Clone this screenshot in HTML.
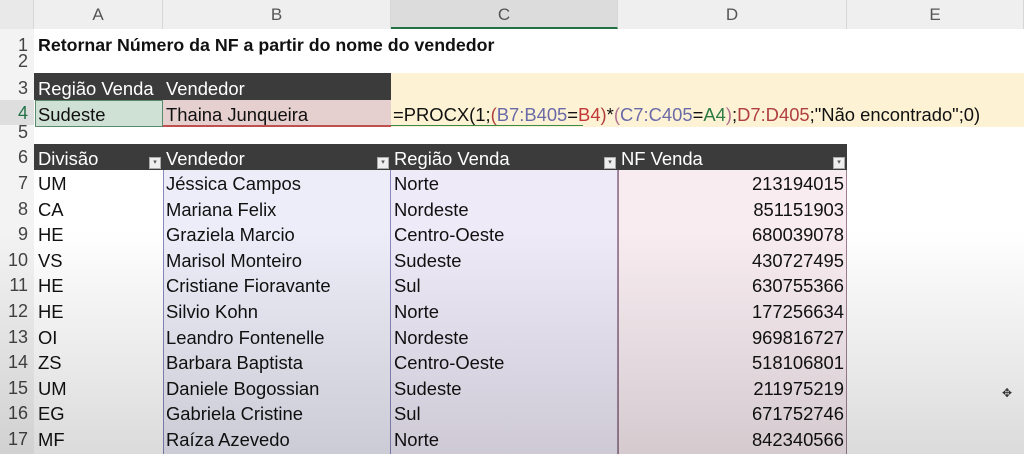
<!DOCTYPE html>
<html><head><meta charset="utf-8"><style>
*{margin:0;padding:0;box-sizing:border-box}
body{width:1024px;height:454px;overflow:hidden;background:#fff;position:relative;font-family:"Liberation Sans",Calibri,sans-serif;font-size:18.4px;color:#111}
.a{position:absolute;white-space:nowrap}
.hdr{position:absolute;top:0;height:29px;background:#efefef;border-right:1px solid #d6d6d6;color:#555;font-size:17px;text-align:center;line-height:30px}
.rn{position:absolute;left:0;width:34px;text-align:right;padding-right:6px;color:#444;font-size:18px;background:#f3f3f3}
.dark{position:absolute;background:#3b3b3b;color:#fff}
.dd{position:absolute;width:12px;height:12px;background:#eee;border:1px solid #aaa;font-size:7px;line-height:10px;text-align:center;color:#555}
.r{position:absolute;height:25.6px;line-height:27px}
</style></head><body>
<div class="hdr" style="left:0;width:34px;background:#e9e9e9"></div>
<div class="hdr" style="left:34px;width:129px">A</div>
<div class="hdr" style="left:163px;width:228px">B</div>
<div class="hdr" style="left:391px;width:227px;background:#dcdcdc;border-bottom:2px solid #217346">C</div>
<div class="hdr" style="left:618px;width:229px">D</div>
<div class="hdr" style="left:847px;width:177px">E</div>
<div class="rn" style="top:29px;height:425px"></div>
<div class="rn" style="top:33px;line-height:24px">1</div>
<div class="rn" style="top:54px;line-height:14px;height:16px;overflow:hidden">2</div>
<div class="rn" style="top:75px;line-height:26px">3</div>
<div class="rn" style="top:100px;line-height:27px;background:#dedede;color:#217346">4</div>
<div class="rn" style="top:125px;line-height:14px;height:17px;overflow:hidden">5</div>
<div class="rn" style="top:144px;line-height:26px">6</div>

<div class="a" style="left:38px;top:35px;font-weight:bold;font-size:17.8px">Retornar Número da NF a partir do nome do vendedor</div>

<div class="dark" style="left:34px;top:73px;width:357px;height:27px"></div>
<div class="a" style="left:38px;top:78px;color:#fff">Região Venda</div>
<div class="a" style="left:166px;top:78px;color:#fff">Vendedor</div>
<div class="a" style="left:391px;top:73px;width:633px;height:54px;background:#fdf3d4"></div>
<div class="a" style="left:35px;top:100px;width:128px;height:27px;background:#cfe0d5;border:1px solid #5a8a6a"></div>
<div class="a" style="left:163px;top:100px;width:228px;height:27px;background:#e5cfcf;border-bottom:2px solid #c05050"></div>
<div class="a" style="left:38px;top:104px">Sudeste</div>
<div class="a" style="left:166px;top:104px">Thaina Junqueira</div>
<div class="a" style="left:391px;top:125px;width:192px;height:1px;background:#3a8a4a"></div>
<div class="a" style="left:393px;top:104px">=PROCX(1;<span style="color:#b04040">(</span><span style="color:#6a6aa8">B7:B405</span>=<span style="color:#c03838">B4</span><span style="color:#b04040">)</span>*<span style="color:#b07090">(</span><span style="color:#6a6aa8">C7:C405</span>=<span style="color:#2c7a44">A4</span><span style="color:#b07090">)</span>;<span style="color:#b04040">D7:D405</span>;"Não encontrado";0)</div>

<div class="dark" style="left:34px;top:144px;width:813px;height:26px"></div>
<div class="a" style="left:38px;top:148px;color:#fff">Divisão</div>
<div class="a" style="left:166px;top:148px;color:#fff">Vendedor</div>
<div class="a" style="left:394px;top:148px;color:#fff">Região Venda</div>
<div class="a" style="left:621px;top:148px;color:#fff">NF Venda</div>
<div class="dd" style="left:149px;top:157px">▾</div>
<div class="dd" style="left:377px;top:157px">▾</div>
<div class="dd" style="left:604px;top:157px">▾</div>
<div class="dd" style="left:833px;top:157px">▾</div>

<div class="a" style="left:163px;top:170px;width:228px;height:284px;background:#ededf9;border-left:1px solid #8888bb;border-right:1px solid #8888bb"></div>
<div class="a" style="left:391px;top:170px;width:227px;height:284px;background:#efeaf8;border-right:1px solid #a08aa8"></div>
<div class="a" style="left:618px;top:170px;width:229px;height:284px;background:#f8ecf1;border-left:1px solid #a08090;border-right:1px solid #a08090"></div>

<div id="rows"></div>
<script>
var d=[["UM","Jéssica Campos","Norte","213194015"],["CA","Mariana Felix","Nordeste","851151903"],["HE","Graziela Marcio","Centro-Oeste","680039078"],["VS","Marisol Monteiro","Sudeste","430727495"],["HE","Cristiane Fioravante","Sul","630755366"],["HE","Silvio Kohn","Norte","177256634"],["OI","Leandro Fontenelle","Nordeste","969816727"],["ZS","Barbara Baptista","Centro-Oeste","518106801"],["UM","Daniele Bogossian","Sudeste","211975219"],["EG","Gabriela Cristine","Sul","671752746"],["MF","Raíza Azevedo","Norte","842340566"]];
var h="";
d.forEach(function(r,i){var t=170+i*25.6;
h+='<div class="r rn" style="top:'+t+'px">'+(i+7)+'</div>';
h+='<div class="r" style="left:38px;top:'+t+'px">'+r[0]+'</div>';
h+='<div class="r" style="left:166px;top:'+t+'px">'+r[1]+'</div>';
h+='<div class="r" style="left:394px;top:'+t+'px">'+r[2]+'</div>';
h+='<div class="r" style="left:618px;width:226px;text-align:right;top:'+t+'px">'+r[3]+'</div>';});
document.getElementById("rows").innerHTML=h;
</script>
<div class="a" style="left:1002px;top:386px;font-size:12px;color:#333">✥</div>
<div class="a" style="left:0;top:230px;width:1024px;height:224px;background:linear-gradient(to bottom,rgba(0,0,0,0),rgba(0,0,0,0.14));pointer-events:none"></div>
</body></html>
